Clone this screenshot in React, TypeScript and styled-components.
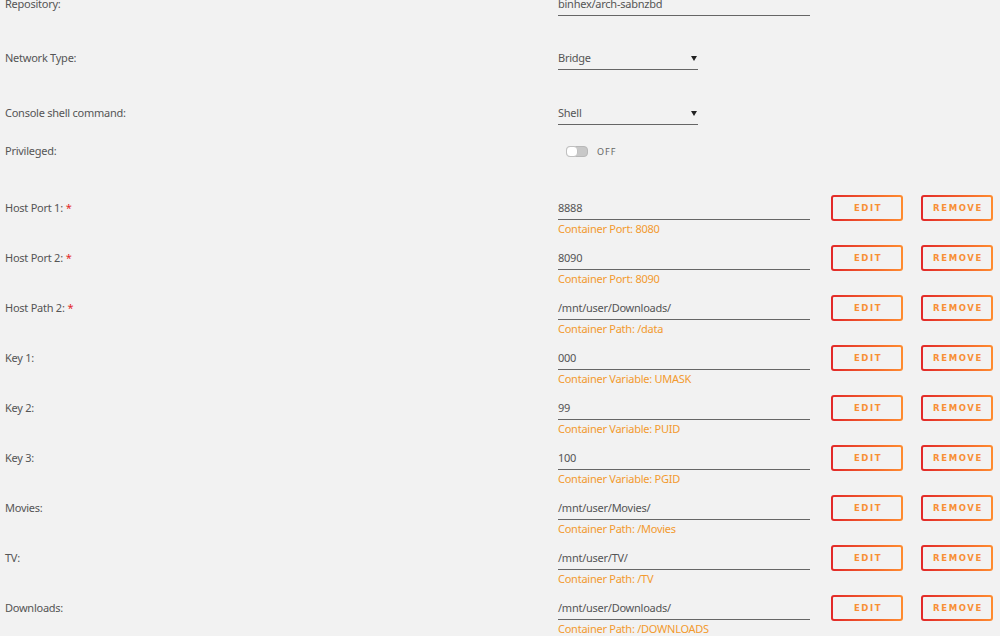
import styled, { createGlobalStyle } from 'styled-components';

const GlobalStyle = createGlobalStyle`
    html, body {
        margin: 0;
        padding: 0;
        background: #f2f2f2;
        overflow: hidden;
    }
    body {
        font-family: "Noto Sans", "Open Sans", sans-serif;
        font-size: 11px;
        letter-spacing: -0.25px;
        color: #555;
    }
`;

const Form = styled.div`
    margin-top: -9px;
    padding-left: 5px;
    width: 995px;
`;

const Row = styled.div<{ $h: number }>`
    display: grid;
    grid-template-columns: 553px 252px 21px 72px 18px 72px;
    align-items: start;
    height: ${(p) => p.$h}px;
`;

const Label = styled.div`
    margin-top: 2px;
    line-height: 22px;
    white-space: nowrap;
`;

const Required = styled.span`
    color: #e22828;
    margin-left: 3px;
`;

const Field = styled.div`
    grid-column: 2;
    display: flex;
    flex-direction: column;
`;

const Input = styled.div<{ $w?: number }>`
    margin-top: 2px;
    width: ${(p) => (p.$w ? `${p.$w}px` : '100%')};
    height: 22px;
    line-height: 22px;
    border-bottom: 1px solid #666;
    box-sizing: content-box;
    display: flex;
    justify-content: space-between;
    align-items: center;
    color: #555;
`;

const Arrow = styled.span`
    width: 0;
    height: 0;
    margin-right: 1px;
    border-left: 3px solid transparent;
    border-right: 3px solid transparent;
    border-top: 5px solid #222;
`;

const Hint = styled.div`
    color: #f29a2e;
    line-height: 14px;
    margin-top: 2px;
`;

const ToggleWrap = styled.div`
    grid-column: 2;
    margin-top: 2px;
    height: 22px;
    display: flex;
    align-items: center;
    padding-left: 8px;
    gap: 9px;
`;

const Track = styled.div`
    width: 22px;
    height: 11px;
    border-radius: 4px;
    background: #c8c8c8;
    border: 1px solid #b8b8b8;
    position: relative;
    box-sizing: border-box;
`;

const Knob = styled.div`
    position: absolute;
    left: -1px;
    top: -1px;
    width: 12px;
    height: 11px;
    border-radius: 4px;
    background: #fff;
    border: 1px solid #c0c0c0;
    box-sizing: border-box;
`;

const ToggleText = styled.span`
    font-size: 9px;
    letter-spacing: 1px;
    color: #666;
`;

const Button = styled.button<{ $col: number }>`
    grid-column: ${(p) => p.$col};
    width: 72px;
    height: 26px;
    padding: 0;
    border: 2px solid transparent;
    border-radius: 3px;
    background: linear-gradient(#f2f2f2, #f2f2f2) padding-box,
        linear-gradient(90deg, #e22828, #ff8c2f) border-box;
    color: #f88f36;
    font-family: "DejaVu Sans", sans-serif;
    font-size: 8.5px;
    font-weight: bold;
    letter-spacing: 1.6px;
    text-indent: 2px;
    cursor: pointer;
`;

interface Mapping {
    label: string;
    value: string;
    hint: string;
    required?: boolean;
}

const mappings: Mapping[] = [
    { label: 'Host Port 1:', value: '8888', hint: 'Container Port: 8080', required: true },
    { label: 'Host Port 2:', value: '8090', hint: 'Container Port: 8090', required: true },
    { label: 'Host Path 2:', value: '/mnt/user/Downloads/', hint: 'Container Path: /data', required: true },
    { label: 'Key 1:', value: '000', hint: 'Container Variable: UMASK' },
    { label: 'Key 2:', value: '99', hint: 'Container Variable: PUID' },
    { label: 'Key 3:', value: '100', hint: 'Container Variable: PGID' },
    { label: 'Movies:', value: '/mnt/user/Movies/', hint: 'Container Path: /Movies' },
    { label: 'TV:', value: '/mnt/user/TV/', hint: 'Container Path: /TV' },
    { label: 'Downloads:', value: '/mnt/user/Downloads/', hint: 'Container Path: /DOWNLOADS' },
];

export default function App() {
    return (
        <>
            <GlobalStyle />
            <Form>
                <Row $h={54}>
                    <Label>Repository:</Label>
                    <Field>
                        <Input>binhex/arch-sabnzbd</Input>
                    </Field>
                </Row>
                <Row $h={55}>
                    <Label>Network Type:</Label>
                    <Field>
                        <Input $w={140}>
                            Bridge
                            <Arrow />
                        </Input>
                    </Field>
                </Row>
                <Row $h={38}>
                    <Label>Console shell command:</Label>
                    <Field>
                        <Input $w={140}>
                            Shell
                            <Arrow />
                        </Input>
                    </Field>
                </Row>
                <Row $h={57}>
                    <Label>Privileged:</Label>
                    <ToggleWrap>
                        <Track>
                            <Knob />
                        </Track>
                        <ToggleText>OFF</ToggleText>
                    </ToggleWrap>
                </Row>
                {mappings.map((m) => (
                    <Row $h={50} key={m.label}>
                        <Label>
                            {m.label}
                            {m.required && <Required>*</Required>}
                        </Label>
                        <Field>
                            <Input>{m.value}</Input>
                            <Hint>{m.hint}</Hint>
                        </Field>
                        <Button $col={4}>EDIT</Button>
                        <Button $col={6}>REMOVE</Button>
                    </Row>
                ))}
            </Form>
        </>
    );
}
